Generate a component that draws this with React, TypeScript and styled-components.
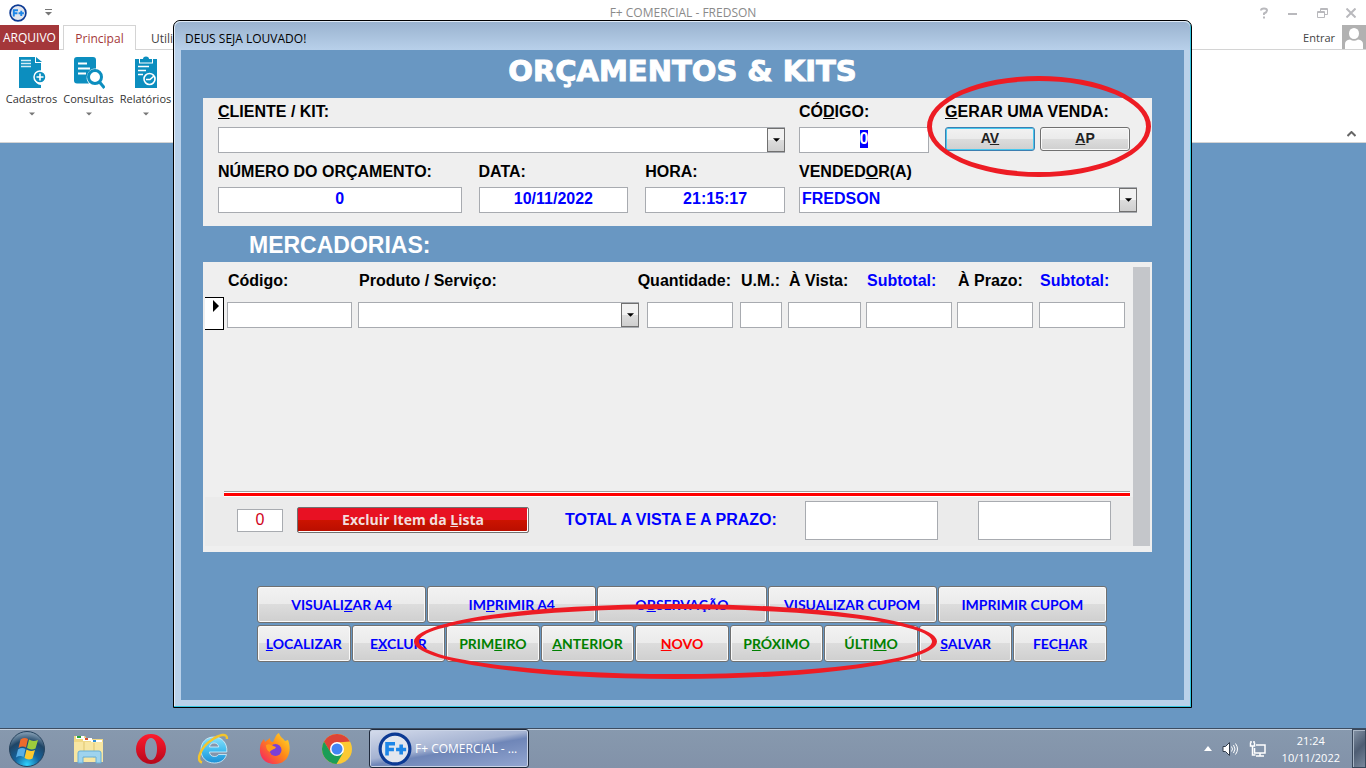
import React, { useEffect, useRef } from "react";
import styled, { createGlobalStyle, css } from "styled-components";

const UI = `"Open Sans", "Noto Sans", sans-serif`;
const ARIAL = `"Liberation Sans", Arial, sans-serif`;
const CALIBRI = `Lato, "Open Sans", sans-serif`;
const BLUE = "#6997c2";
const INK = "#0000ff";

const Global = createGlobalStyle`
  * { box-sizing: border-box; }
  body { margin: 0; background: ${BLUE}; font-family: ${UI}; font-size: 12px; }
  button, input, select { font: inherit; margin: 0; }
`;

/* ---------- Application shell ---------- */

const Shell = styled.div`
  position: relative;
  display: flex;
  flex-direction: column;
  min-height: 100vh;
  overflow: hidden;
`;

const TitleBar = styled.header`
  display: grid;
  grid-template-columns: 1fr auto 1fr;
  align-items: center;
  height: 25px;
  background: #fff;
`;

const QuickAccess = styled.div`
  display: flex;
  align-items: center;
  gap: 13px;
  height: 22px;
  padding-left: 9px;
`;

const AppTitle = styled.h1`
  margin: 0;
  font-size: 12px;
  font-weight: 400;
  color: #8a8a8a;
`;

const WindowControls = styled.div`
  display: flex;
  justify-content: flex-end;
  gap: 13px;
  padding-right: 7px;
`;

const IconButton = styled.button`
  display: flex;
  align-items: center;
  justify-content: center;
  width: 16px;
  height: 16px;
  padding: 0;
  border: 0;
  background: none;
  color: #b9b9bd;
`;

const Tabs = styled.nav`
  display: flex;
  height: 25px;
  background: #fff;
  border-bottom: 1px solid #d4d4d4;
`;

const FileTab = styled.button`
  width: 59px;
  height: 25px;
  padding: 0;
  margin-right: 4px;
  border: 0;
  background: #a4373a;
  color: #fff;
`;

const Tab = styled.button<{ $active?: boolean }>`
  height: 25px;
  padding: 0;
  border: 1px solid transparent;
  border-bottom: 0;
  background: none;
  color: #444;
  ${(p) =>
    p.$active
      ? css`
          width: 73px;
          margin-right: 14px;
          border-color: #d4d4d4;
          background: #fff;
          color: #a4373a;
        `
      : ""}
`;

const Account = styled.button`
  display: flex;
  align-items: center;
  gap: 7px;
  height: 24px;
  margin-left: auto;
  padding: 0;
  border: 0;
  background: none;
  color: #444;
  font-size: 11px;
`;

const Ribbon = styled.div`
  display: flex;
  justify-content: space-between;
  height: 93px;
  padding: 6px 7px 0 3px;
  background: #fff;
  border-bottom: 1px solid #d4d4d4;
`;

const RibbonGroup = styled.div`
  display: flex;
  align-items: flex-start;
`;

const RibbonButton = styled.button`
  display: flex;
  flex-direction: column;
  align-items: center;
  width: 57px;
  padding: 0;
  border: 0;
  background: none;
  color: #333;
  font-size: 11px;
  line-height: 18px;
  white-space: nowrap;
`;

const RibbonLabel = styled.span`
  margin-bottom: 4px;
`;

const RibbonCollapse = styled(IconButton)`
  align-self: flex-end;
  color: #666;
`;

const Workspace = styled.div`
  flex: 1;
  background: ${BLUE};
`;

/* ---------- Dialog window ---------- */

const Dialog = styled.section`
  position: absolute;
  top: 20px;
  left: 173px;
  right: 174px;
  border: 1px solid #000;
  border-radius: 7px 7px 0 0;
  background: #b9d1ea;
  box-shadow: inset -1px -1px 0 #35c5e0, inset 1px 1px 0 #dfeaf6;
  padding: 0 7px 7px;
`;

const DialogTitle = styled.h2`
  margin: 0 -6px;
  padding: 0 10px;
  height: 29px;
  border-radius: 6px 6px 0 0;
  background: linear-gradient(#9ab3cf, #b8d0ea);
  border-top: 1px solid #dfeaf6;
  font-size: 12px;
  font-weight: 400;
  line-height: 33px;
  color: #000;
`;

const Form = styled.form`
  padding-bottom: 38px;
  background: ${BLUE};
`;

const FormTitle = styled.h3`
  margin: 0;
  height: 48px;
  font-family: "DejaVu Sans", sans-serif;
  font-size: 29px;
  font-weight: 700;
  line-height: 42px;
  text-align: center;
  color: #fff;
  -webkit-text-stroke: 1px #fff;
`;

const Panel = styled.div`
  margin: 0 32px 0 22px;
  background: #efefef;
`;

const HeaderPanel = styled(Panel)`
  display: grid;
  grid-template-columns: 567fr 338fr;
  gap: 10px 14px;
  padding: 5px 15px 13px;
`;

const FieldRow = styled.div<{ $cols?: string; $gap?: string }>`
  display: grid;
  grid-template-columns: ${(p) => p.$cols ?? "1fr"};
  column-gap: ${(p) => p.$gap ?? "16px"};
`;

const Field = styled.div`
  position: relative;
  display: flex;
  flex-direction: column;
  gap: 6px;
`;

const labelText = css`
  font-family: ${ARIAL};
  font-size: 16px;
  font-weight: 700;
  line-height: 18px;
  color: #000;
  white-space: nowrap;
`;

const Label = styled.label`
  ${labelText}
`;

const Caption = styled.span`
  ${labelText}
`;

const box = css`
  width: 100%;
  height: 26px;
  border: 1px solid #a8abb0;
  border-radius: 0;
  background: #fff;
  color: ${INK};
  font-family: ${ARIAL};
  font-size: 16px;
  font-weight: 700;
  outline: none;
  &::selection {
    background: ${INK};
    color: #fff;
  }
`;

const TextBox = styled.input<{ $tall?: boolean }>`
  ${box}
  padding: 0 2px 3px;
  text-align: center;
  line-height: 20px;
  ${(p) => (p.$tall ? "height: 39px;" : "")}
`;

const ComboFrame = styled.div`
  position: relative;
`;

const Combo = styled.select`
  ${box}
  display: block;
  appearance: none;
  padding: 0 20px 4px 2px;
`;

const ComboArrow = styled.span`
  position: absolute;
  top: 1px;
  right: 0;
  bottom: 1px;
  display: flex;
  align-items: center;
  justify-content: center;
  width: 18px;
  border: 1px solid #707070;
  background: linear-gradient(#f2f2f2 0 50%, #dddddd 50%, #cfcfcf);
  pointer-events: none;
`;

const face = css`
  padding: 0 0 2px;
  border: 1px solid #707070;
  border-radius: 3px;
  background: linear-gradient(#f2f2f2, #ebebeb 48%, #dddddd 48%, #cfcfcf);
  box-shadow: inset 0 0 0 1px #fafafa;
  white-space: nowrap;
`;

const SaleButtons = styled.div`
  display: grid;
  grid-template-columns: 1fr 1fr;
  column-gap: 5px;
  padding-right: 7px;
`;

const SaleButton = styled.button<{ $focused?: boolean }>`
  ${face}
  height: 24px;
  font-family: ${ARIAL};
  font-size: 14px;
  font-weight: 700;
  color: #222;
  ${(p) =>
    p.$focused
      ? css`
          border-color: #3c7fb1;
          box-shadow: inset 0 0 0 1px #48c8ee;
        `
      : ""}
`;

const SectionTitle = styled.h4`
  margin: 0 0 0 68px;
  height: 36px;
  font-family: ${ARIAL};
  font-size: 23px;
  font-weight: 700;
  line-height: 38px;
  color: #fff;
`;

/* ---------- Items sheet ---------- */

const ItemsPanel = styled(Panel)`
  display: flex;
  padding: 5px 2px 6px;
`;

const Sheet = styled.div`
  flex: 1;
  min-width: 0;
  display: flex;
  flex-direction: column;
`;

const Scrollbar = styled.div`
  width: 17px;
  background: #c4c6ca;
`;

const ItemTable = styled.table`
  width: 100%;
  table-layout: fixed;
  border-collapse: collapse;
`;

const Th = styled.th<{ $accent?: boolean }>`
  ${labelText}
  height: 28px;
  padding: 0 6px 0 1px;
  text-align: left;
  color: ${(p) => (p.$accent ? INK : "#000")};
`;

const EndAligned = styled.span`
  display: flex;
  justify-content: flex-end;
  padding-right: 3px;
`;

const Td = styled.td<{ $gap: number }>`
  padding: 7px ${(p) => p.$gap}px 2px 0;
`;

const SelectorCell = styled.td`
  padding: 2px 3px 0 0;
  vertical-align: top;
`;

const RowSelector = styled.button`
  display: flex;
  justify-content: flex-end;
  align-items: flex-start;
  width: 100%;
  height: 33px;
  padding: 2px 4px;
  border: 1px solid #000;
  border-left: 0;
  background: #fff;
`;

const EmptyRows = styled.div`
  height: 161px;
`;

const Divider = styled.hr`
  width: calc(100% - 22px);
  height: 6px;
  margin: 0 3px 0 auto;
  border: 0;
  background: linear-gradient(#a0a0a0 1px, #fff 1px 2px, #f00 2px 5px, #fff 5px);
`;

const SheetFooter = styled.div`
  display: flex;
  align-items: center;
  height: 49px;
  padding: 0 22px 3px 32px;
  background: #ebebeb;
`;

const CountBox = styled(TextBox)`
  flex: none;
  width: 46px;
  height: 23px;
  margin-right: 14px;
  padding: 0;
  font-weight: 400;
  color: #d0021b;
`;

const DeleteItem = styled.button`
  flex: 0 0 232px;
  height: 26px;
  padding: 0;
  border: 1px solid #707070;
  border-radius: 2px;
  background: linear-gradient(#e81123, #e81123 50%, #cc1400 50%, #b80e00);
  box-shadow: inset -1px -1px 0 #fff;
  font-size: 14px;
  font-weight: 700;
  line-height: 22px;
  color: #f3dede;
`;

const TotalLabel = styled(Label)`
  flex: 1;
  margin-left: 36px;
  color: ${INK};
`;

const Totals = styled.div`
  flex: 0 1 306px;
  display: grid;
  grid-template-columns: 1fr 1fr;
  column-gap: 40px;
`;

/* ---------- Command buttons ---------- */

const Commands = styled.div`
  position: relative;
  display: grid;
  gap: 2px;
  margin: 34px 77px 0 76px;
`;

const CommandRow = styled.div`
  display: grid;
  grid-auto-flow: column;
  grid-auto-columns: 1fr;
  column-gap: 1px;
`;

const CommandButton = styled.button<{ $color?: string }>`
  ${face}
  height: 37px;
  padding-bottom: 1px;
  font-family: ${CALIBRI};
  font-size: 14px;
  font-weight: 700;
  color: ${(p) => p.$color ?? INK};
`;

const Highlight = styled.div`
  position: absolute;
  border: 5px solid #ed1c24;
  border-radius: 50%;
  pointer-events: none;
`;

const SaleHighlight = styled(Highlight)`
  top: -27px;
  left: -18px;
  right: -14px;
  height: 101px;
`;

const NavHighlight = styled(Highlight)`
  top: 18px;
  left: 18.5%;
  right: 20%;
  height: 75px;
`;

/* ---------- Taskbar ---------- */

const Taskbar = styled.footer`
  display: flex;
  align-items: center;
  height: 40px;
  padding-left: 8px;
  background: linear-gradient(#8799ae, #8292a9);
  border-top: 1px solid #3d4d61;
  box-shadow: inset 0 1px 0 #c3cfdd;
  color: #fff;
`;

const Launcher = styled.button<{ $wide?: boolean }>`
  display: flex;
  align-items: center;
  justify-content: center;
  width: ${(p) => (p.$wide ? "38px" : "62px")};
  margin-right: ${(p) => (p.$wide ? "12px" : "0")};
  height: 38px;
  padding: 0;
  border: 0;
  background: none;
`;

const TaskButton = styled.button`
  display: flex;
  align-items: center;
  gap: 3px;
  width: 160px;
  height: 39px;
  margin-left: 1px;
  padding: 0 8px;
  border: 1px solid #1f2a3c;
  border-radius: 3px;
  background: linear-gradient(170deg, #d5dcec 0, #a5b3d2 45%, #6f86b8 55%, #93a6d0);
  box-shadow: inset 0 0 0 1px #c9d3e6;
  color: #fff;
  white-space: nowrap;
`;

const Tray = styled.div`
  display: flex;
  align-items: center;
  gap: 10px;
  margin-left: auto;
  height: 100%;
`;

const Clock = styled.time`
  margin: 0 2px 0 6px;
  font-size: 11px;
  line-height: 17px;
  text-align: center;
`;

const ShowDesktop = styled.button`
  width: 14px;
  height: 39px;
  padding: 0;
  border: 1px solid #39485c;
  background: linear-gradient(135deg, #8493a6, #4e5d73 50%, #79889c);
  box-shadow: inset 1px 1px 0 #a9b6c6;
`;

/* ---------- Drawings ---------- */

function Logo({ size }: { size: number }) {
  return (
    <svg width={size} height={size} viewBox="0 0 32 32" aria-hidden="true">
      <circle cx="16" cy="16" r="14" fill="#e2e6ee" stroke="#0c3a94" strokeWidth="3" />
      <path d="M8.500 22V11h7.500M8 16.500h7M17 16.500h9.500M21.800 11.800v9.400" fill="none" stroke="#1d86e8" strokeWidth="3.400" />
    </svg>
  );
}

const Caret = ({ color = "#000", w = 7 }: { color?: string; w?: number }) => (
  <svg width={w} height="4" viewBox="0 0 8 4" aria-hidden="true">
    <path d="M0 0h8L4 4z" fill={color} />
  </svg>
);

const RecordsIcon = () => (
  <svg width="30" height="34" viewBox="0 0 30 34" aria-hidden="true">
    <path d="M2 1h16v6h6v9a6.500 6.500 0 0 0 0 13v3H2z" fill="#0c8ebf" />
    <path d="M19 1l6 5h-6z" fill="#0c8ebf" />
    <path d="M4 4.500h10M4 7.500h10M4 10.500h10" stroke="#d5edf6" strokeWidth="1.300" />
    <circle cx="23" cy="21" r="6" fill="#0c8ebf" stroke="#fff" strokeWidth="1.500" />
    <path d="M19.500 21h7M23 17.500v7" stroke="#fff" strokeWidth="1.600" />
  </svg>
);

const QueryIcon = () => (
  <svg width="32" height="34" viewBox="0 0 32 34" aria-hidden="true">
    <path d="M4 1h16a3 3 0 0 1 3 3v8.500a9 9 0 0 0-7 15H4a3 3 0 0 1-3-3V4a3 3 0 0 1 3-3z" fill="#0c8ebf" />
    <path d="M5 7.500h9M5 12.500h12M5 17.500h8" stroke="#fff" strokeWidth="2" />
    <circle cx="22" cy="21" r="6.500" fill="#fff" stroke="#0c8ebf" strokeWidth="3" />
    <path d="M26.500 26l5 6" stroke="#0c8ebf" strokeWidth="3" />
  </svg>
);

const ReportIcon = () => (
  <svg width="24" height="34" viewBox="0 0 24 34" aria-hidden="true">
    <path d="M1 3h22v29H1z" fill="#0c8ebf" />
    <path d="M5 1.500h14v6H5z" fill="#fff" />
    <path d="M6 3h3a3 2.500 0 0 1 6 0h3v3.500H6z" fill="#0c8ebf" />
    <path d="M4 10.500h11M4 14.500h8M4 18.500h5" stroke="#fff" strokeWidth="1.600" />
    <circle cx="15.500" cy="23" r="5.500" fill="#0c8ebf" stroke="#fff" strokeWidth="1.600" />
    <path d="M12 23.500h4l4-3.500" fill="none" stroke="#fff" strokeWidth="1.600" />
  </svg>
);

const Avatar = () => (
  <svg width="24" height="24" viewBox="0 0 24 24" aria-hidden="true">
    <path d="M0 0h24v24H0z" fill="#b1b1b1" />
    <ellipse cx="12" cy="8.500" rx="5" ry="5.500" fill="#fff" />
    <path d="M3 24v-5q0-4 5-4.500q4 2.500 8 0q5 .5 5 4.500v5z" fill="#fff" />
  </svg>
);

const StartOrb = () => (
  <svg width="38" height="38" viewBox="0 0 38 38" aria-hidden="true">
    <defs>
      <radialGradient id="orb" cx="50%" cy="95%" r="90%">
        <stop offset="0" stopColor="#2ed3ff" />
        <stop offset=".4" stopColor="#15629c" />
        <stop offset=".75" stopColor="#1f4566" />
        <stop offset="1" stopColor="#7a95ac" />
      </radialGradient>
    </defs>
    <circle cx="19" cy="19" r="17.500" fill="url(#orb)" stroke="#26435e" />
    <path d="M12.500 9.500q4-2.500 7.500-.5l-2 8.500q-3.500-2-7.500.5z" fill="#ee6a2c" />
    <path d="M21 9.500q4 2.500 9 .5l-2.500 8.500q-4.500 2-8.500-.5z" fill="#9ccb3c" />
    <path d="M10 19.500q4-2.500 7.500-.5l-2 8q-3.500-2-7.500.5z" fill="#57aee6" />
    <path d="M18.500 19.500q4 2.500 8.500.5l-2.500 8.500q-4 2-8-.5z" fill="#fdc92f" />
  </svg>
);

const FolderIcon = () => (
  <svg width="32" height="30" viewBox="0 0 32 30" aria-hidden="true">
    <path d="M1 2h11l2 3h16v23H1z" fill="#f0d884" />
    <path d="M3 2h8v3H3z" fill="#fff" />
    <path d="M4 2h4v2H4z" fill="#25a53a" />
    <path d="M10 4h9v3h-9z" fill="#fff" />
    <path d="M12 4h3v2h-3z" fill="#d9502e" />
    <path d="M18 6h11v3H18z" fill="#fff" />
    <path d="M20 6h3v2h-3z" fill="#2f8fd8" />
    <path d="M1 8h29v20H1z" fill="#f7e6a2" />
    <path d="M11 8v16M21 9v15" stroke="#dfc56e" />
    <path d="M5 29V19q0-2 2-2h19q2 0 2 2v10h-5v-6H10v6z" fill="#9ed3ee" stroke="#66aed6" />
  </svg>
);

const OperaIcon = () => (
  <svg width="32" height="32" viewBox="0 0 32 32" aria-hidden="true">
    <defs>
      <linearGradient id="opera" x1="0" y1="0" x2="0" y2="1">
        <stop offset="0" stopColor="#ff1b2d" />
        <stop offset="1" stopColor="#b5081b" />
      </linearGradient>
    </defs>
    <path
      fillRule="evenodd"
      fill="url(#opera)"
      d="M16 1a15 15 0 1 0 0 30a15 15 0 1 0 0-30zM16 5c4 0 6 5 6 11s-2 11-6 11s-6-5-6-11s2-11 6-11z"
    />
  </svg>
);

const ExplorerIcon = () => (
  <svg width="32" height="32" viewBox="0 0 32 32" aria-hidden="true">
    <defs>
      <linearGradient id="ie" x1="0" y1="0" x2="0" y2="1">
        <stop offset="0" stopColor="#8be0fb" />
        <stop offset=".5" stopColor="#43bdf0" />
        <stop offset="1" stopColor="#1c8fd6" />
      </linearGradient>
    </defs>
    <path
      fillRule="evenodd"
      fill="url(#ie)"
      stroke="#d8f2fc"
      strokeWidth=".8"
      d="M17 4C9 4 4 9.500 4 17s5 13 13.500 13c6 0 10.500-3 12-8.500h-8c-1 1.500-2.200 2-4 2-3 0-4.800-1.700-5-4.500h17.300C30.500 10 25 4 17 4zM12.500 14c.4-2.500 2-4 4.600-4s4.300 1.500 4.600 4z"
    />
    <path
      d="M5 29.500C-2.500 27 5.500 13 14 7.500 22 1.500 30.500-.5 30 6"
      fill="none"
      stroke="#f4c52c"
      strokeWidth="2.400"
    />
  </svg>
);

const FirefoxIcon = () => (
  <svg width="32" height="32" viewBox="0 0 32 32" aria-hidden="true">
    <defs>
      <linearGradient id="fox" x1="1" y1="0" x2="0" y2="1">
        <stop offset="0" stopColor="#ffe22e" />
        <stop offset=".45" stopColor="#ff8a16" />
        <stop offset="1" stopColor="#f5156c" />
      </linearGradient>
    </defs>
    <path
      d="M20 0c1 4 4 5 6 8l3-1c4 10 1 23-12 24C6 31.500 0 24 1 15c0-4 2-7 4-9l1 3 5-4c0 3 1 4 3 4 2-3 2-7 6-9z"
      fill="url(#fox)"
    />
    <circle cx="16.500" cy="17" r="6" fill="#7a3fd8" />
    <path d="M7 12c4-2 6 1 10 2-1 3-5 2-6 5-3-1-4-4-4-7z" fill="#ff9a1c" />
  </svg>
);

const ChromeIcon = () => (
  <svg width="32" height="32" viewBox="0 0 32 32" aria-hidden="true">
    <circle cx="16" cy="16" r="15" fill="#fcc934" />
    <path d="M3 8.500A15 15 0 0 1 29 8.500L16 9.500 9.500 19.500z" fill="#dd4437" />
    <path d="M3 8.500A15 15 0 0 0 15.500 31L22 20l-12 0z" fill="#1b9d57" />
    <circle cx="16" cy="16" r="7" fill="#fff" />
    <circle cx="16" cy="16" r="5.500" fill="#4285f4" />
  </svg>
);

/* ---------- Helpers ---------- */

/** Renders a caption whose access key (the letter after "_") is underlined. */
function AccessText({ text }: { text: string }) {
  const at = text.indexOf("_");
  if (at < 0) return <>{text}</>;
  return (
    <span>
      {text.slice(0, at)}
      <u>{text[at + 1]}</u>
      {text.slice(at + 2)}
    </span>
  );
}

function ComboBox({ id, label, value }: { id: string; label?: string; value?: string }) {
  return (
    <ComboFrame>
      <Combo id={id} aria-label={label}>
        <option>{value ?? ""}</option>
      </Combo>
      <ComboArrow>
        <Caret />
      </ComboArrow>
    </ComboFrame>
  );
}

const columns = [
  { id: "codigo", title: "Código:", width: 131, gap: 6 },
  { id: "produto", title: "Produto / Serviço:", width: 289, gap: 8, combo: true },
  { id: "quantidade", title: "Quantidade:", width: 93, gap: 7, end: true },
  { id: "um", title: "U.M.:", width: 48, gap: 6 },
  { id: "avista", title: "À Vista:", width: 78, gap: 5 },
  { id: "subvista", title: "Subtotal:", width: 91, gap: 5, accent: true },
  { id: "aprazo", title: "À Prazo:", width: 82, gap: 6 },
  { id: "subprazo", title: "Subtotal:", width: 94, gap: 8, accent: true },
];

const outputCommands = ["VISUALI_ZAR A4", "IM_PRIMIR A4", "O_BSERVAÇÃO", "VISUALIZAR CUPOM", "IMPRIMIR CUPOM"];

const recordCommands: [string, string?][] = [
  ["_LOCALIZAR"],
  ["E_XCLUIR"],
  ["PRIM_EIRO", "#008000"],
  ["_ANTERIOR", "#008000"],
  ["_NOVO", "#ff0000"],
  ["P_RÓXIMO", "#008000"],
  ["ÚLTI_MO", "#008000"],
  ["_SALVAR"],
  ["FEC_HAR"],
];

export default function App() {
  const codeRef = useRef<HTMLInputElement>(null);

  useEffect(() => {
    codeRef.current?.focus();
    codeRef.current?.select();
  }, []);

  return (
    <Shell>
      <Global />
      <TitleBar>
        <QuickAccess>
          <Logo size={18} />
          <IconButton aria-label="Personalizar">
            <svg width="7" height="7" viewBox="0 0 7 7">
              <path d="M0 .5h7" stroke="#777" />
              <path d="M0 3h7L3.500 6.500z" fill="#777" />
            </svg>
          </IconButton>
        </QuickAccess>
        <AppTitle>F+ COMERCIAL - FREDSON</AppTitle>
        <WindowControls>
          <IconButton aria-label="Ajuda">
            <svg width="10" height="12" viewBox="0 0 10 12" fill="none" stroke="currentColor" strokeWidth="2">
              <path d="M2 3.500Q2 1.500 5 1.500t3 2Q8 5 5 6.500V8M5 9.500v2" />
            </svg>
          </IconButton>
          <IconButton aria-label="Minimizar">
            <svg width="10" height="10" viewBox="0 0 10 10" stroke="currentColor" strokeWidth="2">
              <path d="M0 6h9" />
            </svg>
          </IconButton>
          <IconButton aria-label="Restaurar">
            <svg width="11" height="10" viewBox="0 0 11 10" fill="none" stroke="currentColor">
              <path d="M.5 3.500h7v6h-7zM.5 4.500h7M3.500 3V.5h7v6H8M3.500 1.500h7" />
            </svg>
          </IconButton>
          <IconButton aria-label="Fechar">
            <svg width="10" height="10" viewBox="0 0 10 10" stroke="currentColor" strokeWidth="2">
              <path d="M.5.5l9 9M9.500.5l-9 9" />
            </svg>
          </IconButton>
        </WindowControls>
      </TitleBar>

      <Tabs>
        <FileTab>ARQUIVO</FileTab>
        <Tab $active>Principal</Tab>
        <Tab>Utili</Tab>
        <Account>
          Entrar
          <Avatar />
        </Account>
      </Tabs>

      <Ribbon>
        <RibbonGroup>
          <RibbonButton>
            <RecordsIcon />
            <RibbonLabel>Cadastros</RibbonLabel>
            <Caret color="#777" w={6} />
          </RibbonButton>
          <RibbonButton>
            <QueryIcon />
            <RibbonLabel>Consultas</RibbonLabel>
            <Caret color="#777" w={6} />
          </RibbonButton>
          <RibbonButton>
            <ReportIcon />
            <RibbonLabel>Relatórios</RibbonLabel>
            <Caret color="#777" w={6} />
          </RibbonButton>
        </RibbonGroup>
        <RibbonCollapse aria-label="Recolher">
          <svg width="9" height="6" viewBox="0 0 9 6" fill="none" stroke="currentColor" strokeWidth="2">
            <path d="M.5 5l4-4 4 4" />
          </svg>
        </RibbonCollapse>
      </Ribbon>

      <Workspace />

      <Dialog>
        <DialogTitle>DEUS SEJA LOUVADO!</DialogTitle>
        <Form onSubmit={(e) => e.preventDefault()}>
          <FormTitle>ORÇAMENTOS &amp; KITS</FormTitle>

          <HeaderPanel>
            <Field>
              <Label htmlFor="cliente">
                <AccessText text="_CLIENTE / KIT:" />
              </Label>
              <ComboBox id="cliente" />
            </Field>
            <FieldRow $cols="130fr 192fr">
              <Field>
                <Label htmlFor="codigo">
                  <AccessText text="CÓ_DIGO:" />
                </Label>
                <TextBox id="codigo" ref={codeRef} defaultValue="0" />
              </Field>
              <Field>
                <Caption>
                  <AccessText text="_GERAR UMA VENDA:" />
                </Caption>
                <SaleButtons>
                  <SaleButton type="button" $focused>
                    <AccessText text="A_V" />
                  </SaleButton>
                  <SaleButton type="button">
                    <AccessText text="_AP" />
                  </SaleButton>
                </SaleButtons>
                <SaleHighlight />
              </Field>
            </FieldRow>
            <FieldRow $cols="244fr 150fr 140fr" $gap="17px">
              <Field>
                <Label htmlFor="numero">NÚMERO DO ORÇAMENTO:</Label>
                <TextBox id="numero" defaultValue="0" />
              </Field>
              <Field>
                <Label htmlFor="data">DATA:</Label>
                <TextBox id="data" defaultValue="10/11/2022" />
              </Field>
              <Field>
                <Label htmlFor="hora">HORA:</Label>
                <TextBox id="hora" defaultValue="21:15:17" />
              </Field>
            </FieldRow>
            <Field>
              <Label htmlFor="vendedor">
                <AccessText text="VENDED_OR(A)" />
              </Label>
              <ComboBox id="vendedor" value="FREDSON" />
            </Field>
          </HeaderPanel>

          <SectionTitle>MERCADORIAS:</SectionTitle>

          <ItemsPanel>
            <Sheet>
              <ItemTable>
                <colgroup>
                  <col width={22} />
                  {columns.map((c) => (
                    <col key={c.id} width={c.width} />
                  ))}
                </colgroup>
                <thead>
                  <tr>
                    <td />
                    {columns.map((c) => (
                      <Th key={c.id} $accent={c.accent} scope="col">
                        {c.end ? <EndAligned>{c.title}</EndAligned> : c.title}
                      </Th>
                    ))}
                  </tr>
                </thead>
                <tbody>
                  <tr>
                    <SelectorCell>
                      <RowSelector type="button" aria-label="Registro atual">
                        <svg width="6" height="12" viewBox="0 0 6 12">
                          <path d="M0 0l6 6-6 6z" />
                        </svg>
                      </RowSelector>
                    </SelectorCell>
                    {columns.map((c) => (
                      <Td key={c.id} $gap={c.gap}>
                        {c.combo ? (
                          <ComboBox id={`item-${c.id}`} label={c.title} />
                        ) : (
                          <TextBox aria-label={c.title} />
                        )}
                      </Td>
                    ))}
                  </tr>
                </tbody>
              </ItemTable>
              <EmptyRows />
              <Divider />
              <SheetFooter>
                <CountBox aria-label="Itens" defaultValue="0" />
                <DeleteItem type="button">
                  <AccessText text="Excluir Item da _Lista" />
                </DeleteItem>
                <TotalLabel htmlFor="total-vista">TOTAL A VISTA E A PRAZO:</TotalLabel>
                <Totals>
                  <TextBox id="total-vista" $tall />
                  <TextBox aria-label="Total a prazo" $tall />
                </Totals>
              </SheetFooter>
            </Sheet>
            <Scrollbar />
          </ItemsPanel>

          <Commands>
            <CommandRow>
              {outputCommands.map((text) => (
                <CommandButton type="button" key={text}>
                  <AccessText text={text} />
                </CommandButton>
              ))}
            </CommandRow>
            <CommandRow>
              {recordCommands.map(([text, color]) => (
                <CommandButton type="button" key={text} $color={color}>
                  <AccessText text={text} />
                </CommandButton>
              ))}
            </CommandRow>
            <NavHighlight />
          </Commands>
        </Form>
      </Dialog>

      <Taskbar>
        <Launcher $wide aria-label="Iniciar">
          <StartOrb />
        </Launcher>
        <Launcher aria-label="Arquivos">
          <FolderIcon />
        </Launcher>
        <Launcher aria-label="Opera">
          <OperaIcon />
        </Launcher>
        <Launcher aria-label="Internet Explorer">
          <ExplorerIcon />
        </Launcher>
        <Launcher aria-label="Firefox">
          <FirefoxIcon />
        </Launcher>
        <Launcher aria-label="Chrome">
          <ChromeIcon />
        </Launcher>
        <TaskButton>
          <Logo size={34} />
          F+ COMERCIAL - ...
        </TaskButton>
        <Tray>
          <svg width="8" height="5" viewBox="0 0 8 5" aria-hidden="true">
            <path d="M0 5h8L4 0z" fill="#fff" />
          </svg>
          <svg width="17" height="16" viewBox="0 0 17 16" fill="none" stroke="#fff" aria-hidden="true">
            <path d="M1 5.500h2.500L7.500 1.500v13L3.500 10.500H1z" fill="#fff" stroke="#333d4c" />
            <path d="M9.500 5.500q2 2.500 0 5M11.500 4q3 4 0 8M13.500 2.500q4 5.500 0 11" />
          </svg>
          <svg width="17" height="16" viewBox="0 0 17 16" fill="none" stroke="#fff" strokeWidth="1.500" aria-hidden="true">
            <path d="M7 4h9v8H5.500V7M7 15h8M11 12v3" />
            <path d="M1.500 1.500v3.500h4V1.500M3.500 5v9h3M2 0v2M5 0v2" />
          </svg>
          <Clock>
            21:24
            <br />
            10/11/2022
          </Clock>
          <ShowDesktop aria-label="Mostrar área de trabalho" />
        </Tray>
      </Taskbar>
    </Shell>
  );
}
